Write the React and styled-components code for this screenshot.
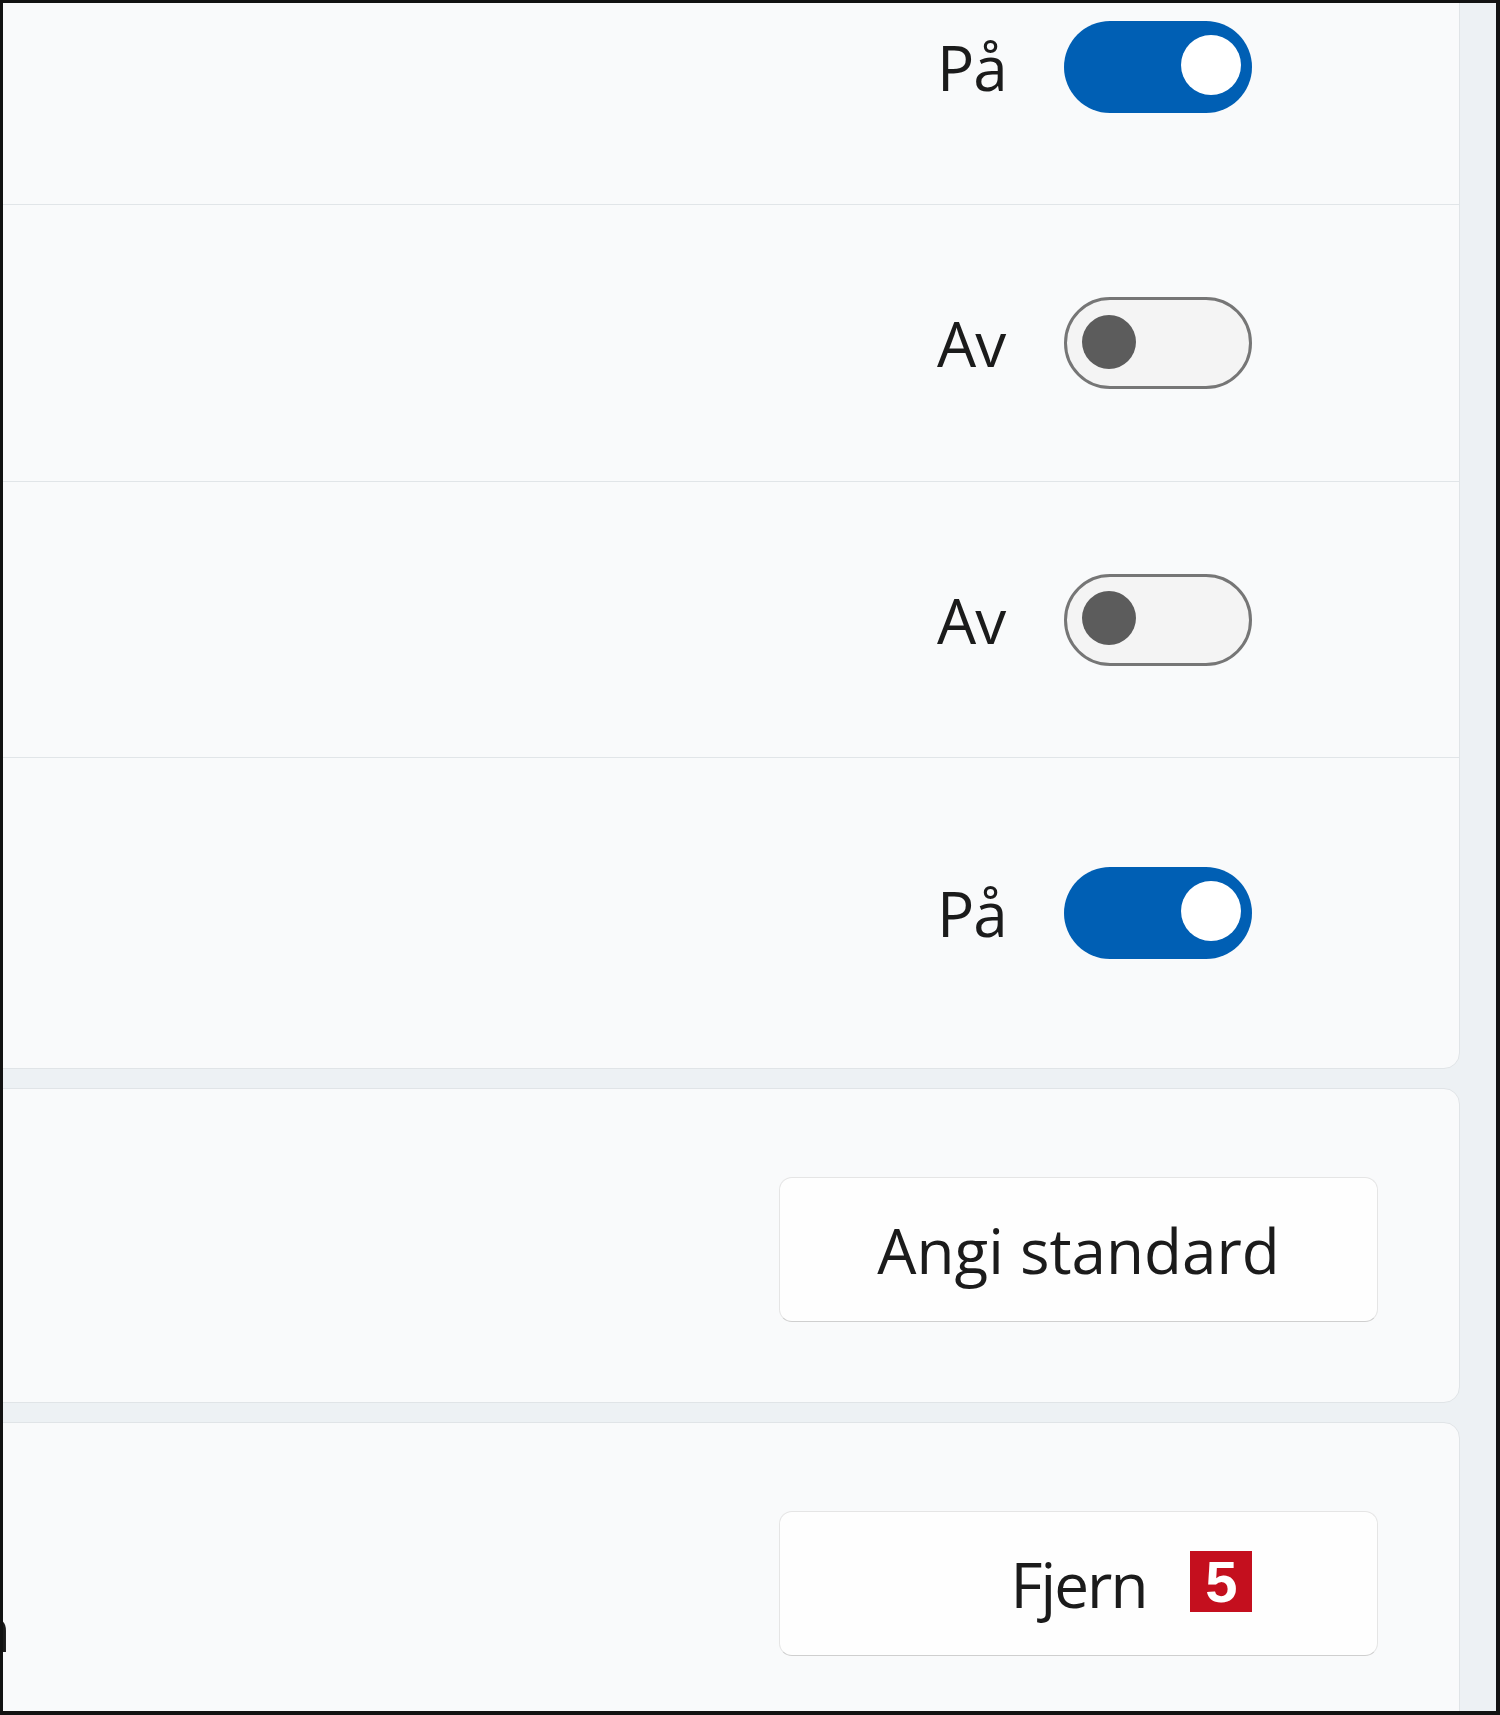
import React from "react";
import styled, { createGlobalStyle } from "styled-components";

const GlobalStyle = createGlobalStyle`
  html, body {
    margin: 0;
    padding: 0;
  }
  body {
    background: #eef1f4;
    font-family: "Open Sans", "Noto Sans", sans-serif;
    color: #1b1b1b;
  }
`;

const Frame = styled.div`
  box-sizing: border-box;
  width: 1500px;
  height: 1715px;
  border-style: solid;
  border-color: #121212;
  border-width: 3px 4px 4px 3px;
  background: #edf1f4;
  overflow: hidden;
`;

const Column = styled.div`
  display: flex;
  flex-direction: column;
  gap: 19px;
  margin: -75px 36px 0 -40px;
`;

const Card = styled.section`
  display: flex;
  flex-direction: column;
  background: #f9fafb;
  border: 1px solid #e0e4e7;
  border-radius: 16px;
`;

const Row = styled.div`
  box-sizing: border-box;
  display: flex;
  align-items: center;
  justify-content: flex-end;
  height: ${(p) => p.$h}px;
  padding-right: 207px;
  & + & {
    border-top: 1px solid #e1e5e8;
  }
`;

const ActionRow = styled.div`
  box-sizing: border-box;
  display: flex;
  align-items: flex-start;
  justify-content: flex-end;
  height: ${(p) => p.$h}px;
  padding: 88px 81px 0 0;
`;

const ToggleGroup = styled.div`
  display: flex;
  align-items: center;
`;

const StateLabel = styled.span`
  width: 127px;
  font-size: 62px;
  line-height: 84px;
  letter-spacing: -1px;
  color: #1b1b1b;
`;

const Track = styled.span`
  box-sizing: border-box;
  display: flex;
  align-items: center;
  justify-content: ${(p) => (p.$on ? "flex-end" : "flex-start")};
  width: 188px;
  height: 92px;
  border-radius: 46px;
  background: ${(p) => (p.$on ? "#005fb4" : "#f4f4f4")};
  border: ${(p) => (p.$on ? "none" : "3px solid #767676")};
  padding: ${(p) => (p.$on ? "0 11px" : "0 15px")};
`;

const Knob = styled.span`
  width: ${(p) => (p.$on ? 60 : 54)}px;
  height: ${(p) => (p.$on ? 60 : 54)}px;
  margin-top: ${(p) => (p.$on ? -4 : -3)}px;
  border-radius: 50%;
  background: ${(p) => (p.$on ? "#ffffff" : "#5c5c5c")};
`;

const ActionButton = styled.button`
  box-sizing: border-box;
  display: flex;
  align-items: center;
  justify-content: center;
  width: 599px;
  height: 145px;
  padding: 0;
  border-radius: 13px;
  background: #fefefe;
  border: 1px solid #e5e5e5;
  border-bottom-color: #cfcfcf;
  font-family: "Open Sans", "Noto Sans", sans-serif;
  font-size: 62px;
  line-height: 84px;
  color: #1b1b1b;
`;

const ButtonLabel = styled.span`
  position: relative;
  letter-spacing: ${(p) => p.$tight || 0}px;
`;

const StepBadge = styled.span`
  position: absolute;
  left: calc(100% + 44px);
  top: 50%;
  margin-top: -33px;
  width: 62px;
  height: 61px;
  background: #c40f1e;
  color: #ffffff;
  font-family: "Liberation Sans", Arial, sans-serif;
  font-weight: 700;
  font-size: 58px;
  line-height: 61px;
  letter-spacing: 0;
  text-align: center;
`;

const ClippedText = styled.span`
  width: 47px;
  margin-top: 86px;
  margin-right: auto;
  overflow: hidden;
  white-space: nowrap;
  direction: rtl;
  font-size: 62px;
  line-height: 62px;
  color: #1b1b1b;
`;

function Toggle({ on }) {
  return (
    <ToggleGroup>
      <StateLabel>{on ? "På" : "Av"}</StateLabel>
      <Track $on={on} role="switch" aria-checked={on}>
        <Knob $on={on} />
      </Track>
    </ToggleGroup>
  );
}

export default function App() {
  return (
    <>
      <GlobalStyle />
      <Frame>
        <Column>
          <Card>
            <Row $h={275}>
              <Toggle on />
            </Row>
            <Row $h={277}>
              <Toggle on={false} />
            </Row>
            <Row $h={276}>
              <Toggle on={false} />
            </Row>
            <Row $h={311}>
              <Toggle on />
            </Row>
          </Card>
          <Card>
            <ActionRow $h={313}>
              <ActionButton>
                <ButtonLabel>Angi standard</ButtonLabel>
              </ActionButton>
            </ActionRow>
          </Card>
          <Card>
            <ActionRow $h={313}>
              <ClippedText>installasjon</ClippedText>
              <ActionButton>
                <ButtonLabel $tight={-2}>
                  Fjern
                  <StepBadge>5</StepBadge>
                </ButtonLabel>
              </ActionButton>
            </ActionRow>
          </Card>
        </Column>
      </Frame>
    </>
  );
}
